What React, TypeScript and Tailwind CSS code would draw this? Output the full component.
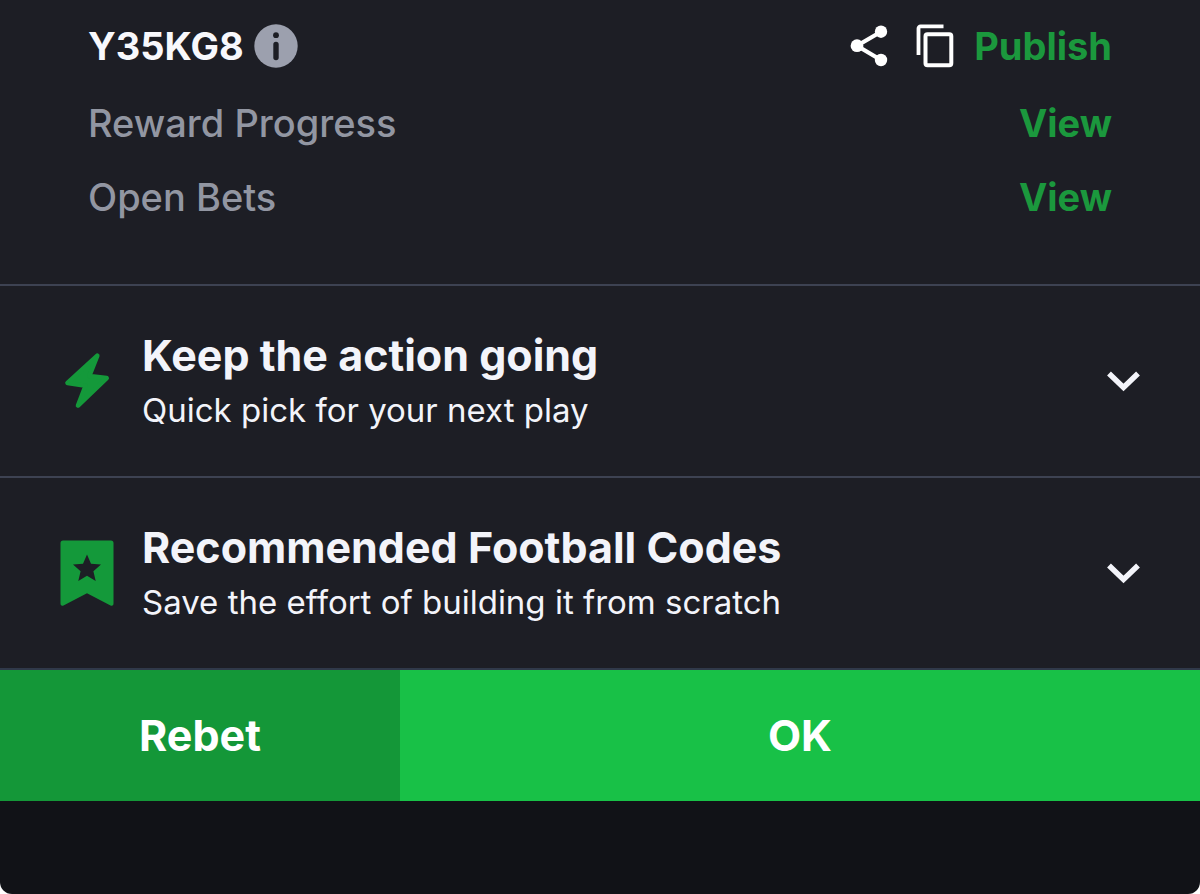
import { useState } from 'react';
import type { ReactNode } from 'react';

function InfoIcon() {
  return (
    <svg viewBox="0 0 44 44" className="size-11" aria-hidden="true">
      <circle cx="22" cy="22" r="21.7" fill="#9ca0ae" />
      <circle cx="22" cy="11.2" r="2.9" fill="#1d1e25" />
      <rect x="19.3" y="17.8" width="5.4" height="18.4" rx="2.7" fill="#1d1e25" />
    </svg>
  );
}

function ShareIcon() {
  return (
    <svg viewBox="0 0 38 44" className="h-11 w-[38px]" aria-hidden="true">
      <path d="M31 7.7 7 21.700 31 36" fill="none" stroke="#fff" strokeWidth="4.200" />
      <circle cx="31" cy="7.700" r="6.200" fill="#fff" />
      <circle cx="7" cy="21.700" r="6.400" fill="#fff" />
      <circle cx="31" cy="36" r="6.200" fill="#fff" />
    </svg>
  );
}

function CopyIcon() {
  return (
    <svg viewBox="0 0 38 44" className="h-11 w-[38px]" fill="none" stroke="#fff" aria-hidden="true">
      <path d="M27.500 2.400H4.500a2 2 0 0 0-2 2V31" strokeWidth="3.800" />
      <rect x="9.500" y="10.200" width="25.800" height="31" rx="2" strokeWidth="4" />
    </svg>
  );
}

function BoltIcon() {
  return (
    <svg viewBox="0 0 54 66" className="h-[66px] w-[54px]" aria-hidden="true">
      <path
        d="M37.300 7.700 7.500 35l18.200 2.700L18 57.500 46.700 30 29.300 28z"
        fill="#14993a"
        stroke="#14993a"
        strokeWidth="4.600"
        strokeLinejoin="round"
      />
    </svg>
  );
}

function BookmarkIcon() {
  return (
    <svg viewBox="0 0 54 66" className="h-[66px] w-[54px]" aria-hidden="true">
      <path
        d="M3 .5h48a2.500 2.500 0 0 1 2.500 2.500v60.500c0 2-1.500 2.600-3 1.900L27 53.300 3.500 65.400c-1.500.7-3 .1-3-1.900V3A2.500 2.500 0 0 1 3 .5z"
        fill="#14993a"
      />
      <path
        d="m27 14.500 4 9.200 10 .9-7.600 6.600 2.300 9.800-8.700-5.200-8.700 5.200 2.300-9.800-7.600-6.600 10-.9z"
        fill="#1d1e25"
      />
    </svg>
  );
}

function ChevronIcon({ open }: { open: boolean }) {
  return (
    <svg
      viewBox="0 0 34 22"
      className={`h-[22px] w-[34px] shrink-0 ${open ? 'rotate-180' : ''}`}
      aria-hidden="true"
    >
      <path d="m3 3.500 14.500 14L32 3.500" fill="none" stroke="#f3f4fa" strokeWidth="5.500" />
    </svg>
  );
}

const links = [
  { label: 'Reward Progress', href: '#rewards' },
  { label: 'Open Bets', href: '#open-bets' },
];

type PanelProps = {
  icon: ReactNode;
  title: string;
  subtitle: string;
};

function Panel({ icon, title, subtitle }: PanelProps) {
  const [open, setOpen] = useState(false);

  return (
    <section className="border-t-2 border-[#3d4252]">
      <button
        type="button"
        aria-expanded={open}
        onClick={() => setOpen(!open)}
        className="flex w-full items-center gap-7 px-[60px] py-10 text-left"
      >
        {icon}
        <span className="flex-1">
          <span className="block text-[43px] leading-[58px] font-bold text-[#f3f4fa]">{title}</span>
          <span className="block text-[33px] leading-[52px] text-[#f3f4fa]">{subtitle}</span>
        </span>
        <ChevronIcon open={open} />
      </button>
    </section>
  );
}

export default function App() {
  return (
    <div className="bg-white font-['Inter',sans-serif]">
      <main className="overflow-hidden rounded-b-xl bg-[#111217]">
        <div className="bg-[#1d1e25]">
          {/* Booking code */}
          <div className="px-[88px] pt-[6px] pb-[50px] text-[38px]">
            <div className="flex h-20 items-center justify-between">
              <div className="flex items-center gap-2.5">
                <span className="font-bold text-[#f8f8fc]">Y35KG8</span>
                <button type="button" aria-label="About this code">
                  <InfoIcon />
                </button>
              </div>
              <div className="flex items-center">
                <button type="button" aria-label="Share" className="mr-7">
                  <ShareIcon />
                </button>
                <button type="button" aria-label="Copy" className="mr-5">
                  <CopyIcon />
                </button>
                <button type="button" className="font-bold text-[#1b983d]">
                  Publish
                </button>
              </div>
            </div>
            {links.map((link) => (
              <div key={link.href} className="flex h-[74px] items-center justify-between">
                <span className="font-medium text-[#9296a2]">{link.label}</span>
                <a href={link.href} aria-label={`View ${link.label}`} className="font-bold text-[#1b983d]">
                  View
                </a>
              </div>
            ))}
          </div>

          <Panel
            icon={<BoltIcon />}
            title="Keep the action going"
            subtitle="Quick pick for your next play"
          />
          <Panel
            icon={<BookmarkIcon />}
            title="Recommended Football Codes"
            subtitle="Save the effort of building it from scratch"
          />
        </div>

        {/* Actions */}
        <div className="grid grid-cols-3 border-t-2 border-[#30394a] text-[43px] font-bold text-white">
          <button type="button" className="h-[131px] bg-[#149738]">
            Rebet
          </button>
          <button type="button" className="col-span-2 h-[131px] bg-[#18c147]">
            OK
          </button>
        </div>
        <div className="h-[93px]" />
      </main>
    </div>
  );
}
